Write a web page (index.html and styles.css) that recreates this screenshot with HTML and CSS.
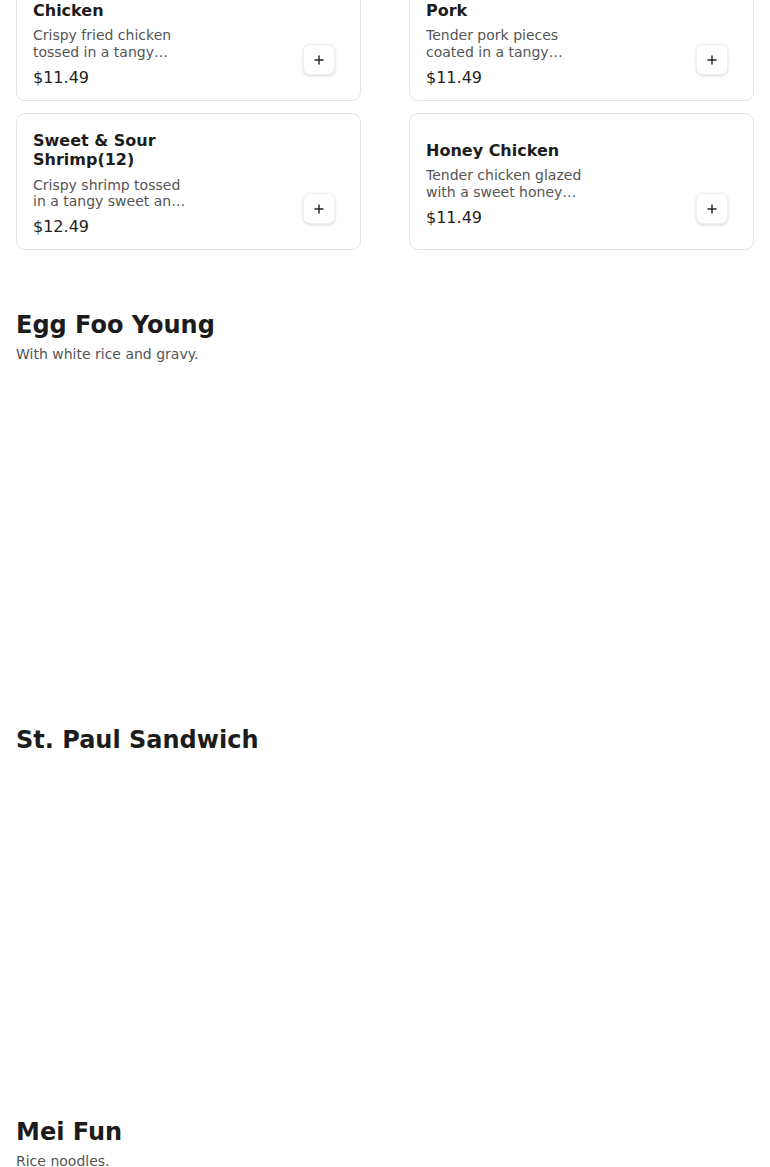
FILE: index.html
```html
<!DOCTYPE html>
<html lang="en">
<head>
    <meta charset="UTF-8">
    <meta name="viewport" content="width=device-width, initial-scale=1.0">
    <title>Menu</title>
    <link rel="stylesheet" href="styles.css">
</head>
<body>
    <main class="menu">
        <!-- Sweet & Sour (scrolled past the header) -->
        <section class="menu-section menu-section--scrolled">
            <div class="item-grid">
                <div class="item-card">
                    <div class="item-info">
                        <div class="item-name">Sweet &amp; Sour Chicken</div>
                        <div class="item-desc">Crispy fried chicken tossed in a tangy sweet and sour sauce with peppers and onions.</div>
                        <div class="item-price">$11.49</div>
                    </div>
                    <div class="item-media">
                        <button class="add-btn" aria-label="Add">
                            <svg width="10" height="10" viewBox="0 0 10 10"><path d="M5 0.5v9M0.5 5h9" stroke="#222" stroke-width="1.4" fill="none"/></svg>
                        </button>
                    </div>
                </div>
                <div class="item-card">
                    <div class="item-info">
                        <div class="item-name">Sweet &amp; Sour Pork</div>
                        <div class="item-desc">Tender pork pieces coated in a tangy sweet and sour sauce with pineapple.</div>
                        <div class="item-price">$11.49</div>
                    </div>
                    <div class="item-media">
                        <button class="add-btn" aria-label="Add">
                            <svg width="10" height="10" viewBox="0 0 10 10"><path d="M5 0.5v9M0.5 5h9" stroke="#222" stroke-width="1.4" fill="none"/></svg>
                        </button>
                    </div>
                </div>
                <div class="item-card">
                    <div class="item-info">
                        <div class="item-name">Sweet &amp; Sour Shrimp(12)</div>
                        <div class="item-desc">Crispy shrimp tossed in a tangy sweet and sour sauce with peppers and onions.</div>
                        <div class="item-price">$12.49</div>
                    </div>
                    <div class="item-media">
                        <button class="add-btn" aria-label="Add">
                            <svg width="10" height="10" viewBox="0 0 10 10"><path d="M5 0.5v9M0.5 5h9" stroke="#222" stroke-width="1.4" fill="none"/></svg>
                        </button>
                    </div>
                </div>
                <div class="item-card">
                    <div class="item-info">
                        <div class="item-name">Honey Chicken</div>
                        <div class="item-desc">Tender chicken glazed with a sweet honey sauce and sesame seeds.</div>
                        <div class="item-price">$11.49</div>
                    </div>
                    <div class="item-media">
                        <button class="add-btn" aria-label="Add">
                            <svg width="10" height="10" viewBox="0 0 10 10"><path d="M5 0.5v9M0.5 5h9" stroke="#222" stroke-width="1.4" fill="none"/></svg>
                        </button>
                    </div>
                </div>
            </div>
        </section>

        <section class="menu-section">
            <div class="section-head">
                <h2 class="section-title">Egg Foo Young</h2>
                <p class="section-sub">With white rice and gravy.</p>
            </div>
            <div class="item-placeholder"></div>
        </section>

        <section class="menu-section">
            <div class="section-head">
                <h2 class="section-title">St. Paul Sandwich</h2>
            </div>
            <div class="item-placeholder"></div>
        </section>

        <section class="menu-section">
            <div class="section-head">
                <h2 class="section-title">Mei Fun</h2>
                <p class="section-sub">Rice noodles.</p>
            </div>
            <div class="item-placeholder"></div>
        </section>
    </main>
</body>
</html>
```

FILE: styles.css
```css
body {
    margin: 0;
    font-family: 'DejaVu Sans', 'Noto Sans', sans-serif;
    background-color: #fff;
    color: #1f1f1f;
}

.menu {
    padding: 0 16px;
}

/* Sections */
.menu-section {
    padding-bottom: 59px;
}

.menu-section--scrolled {
    margin-top: -36px;
    padding-bottom: 61px;
}

.section-head {
    margin-bottom: 16px;
}

.section-title {
    margin: 0;
    font-size: 24px;
    line-height: 1.2;
    font-weight: bold;
    color: #1c1c1c;
}

.section-sub {
    margin: 6px 0 0;
    font-size: 14px;
    line-height: 1.2;
    color: #555;
}

.item-placeholder {
    height: 288px;
}

/* Item cards */
.item-grid {
    display: grid;
    grid-template-columns: 1fr 1fr;
    column-gap: 48px;
    row-gap: 12px;
}

.item-card {
    display: flex;
    align-items: center;
    border: 1px solid #e4e4e4;
    border-radius: 9px;
    padding: 17px 16px 13px;
    background: #fff;
}

.item-info {
    width: 160px;
}

.item-name {
    font-size: 16px;
    line-height: 1.2;
    font-weight: bold;
    color: #1c1c1c;
    margin-bottom: 7px;
}

.item-desc {
    font-size: 14px;
    line-height: 1.2;
    color: #555;
    display: -webkit-box;
    -webkit-line-clamp: 2;
    -webkit-box-orient: vertical;
    overflow: hidden;
    margin-bottom: 7px;
}

.item-price {
    font-size: 16px;
    line-height: 1.2;
    color: #222;
}

.item-media {
    margin-left: auto;
    align-self: stretch;
    display: flex;
    align-items: flex-end;
    padding: 0 9px 12px 0;
}

.add-btn {
    width: 32px;
    height: 31px;
    display: flex;
    align-items: center;
    justify-content: center;
    padding: 0;
    border: 1px solid #f0f0f0;
    border-radius: 7px;
    background: #fff;
    box-shadow: 0 1px 3px rgba(0, 0, 0, 0.16);
    cursor: pointer;
}
```
